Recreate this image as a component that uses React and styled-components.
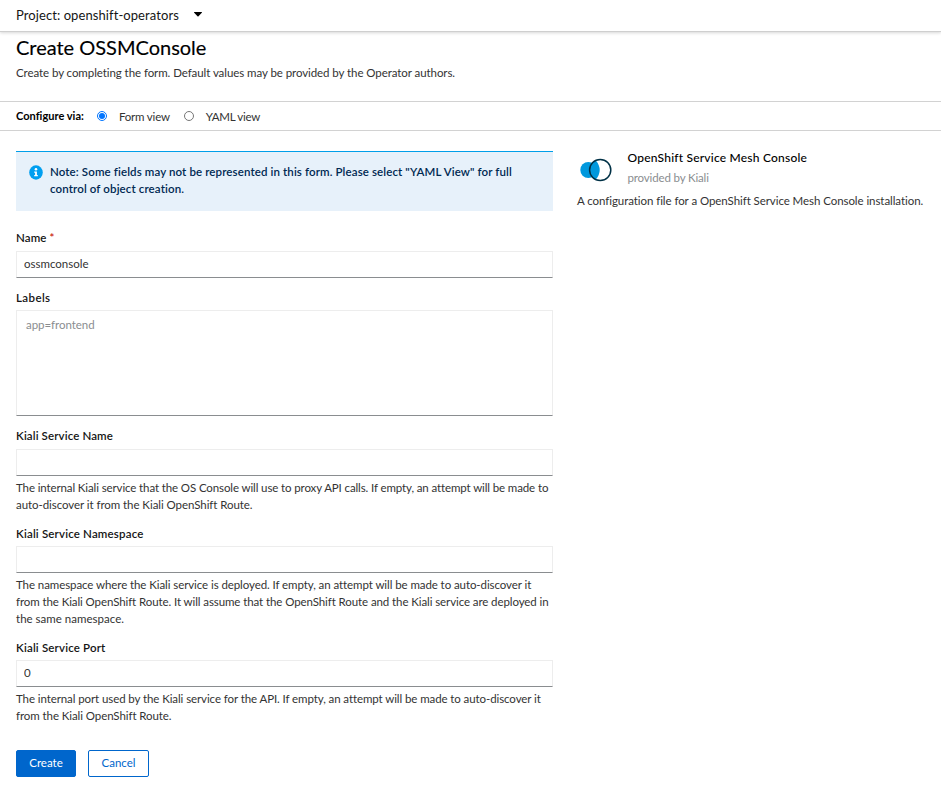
import React from "react";
import styled, { createGlobalStyle } from "styled-components";

const GlobalStyle = createGlobalStyle`
  *, *::before, *::after { box-sizing: border-box; }
  body {
    margin: 0;
    background: #fff;
    color: #151515;
    font-family: Lato, "Liberation Sans", sans-serif;
    font-size: 11.5px;
    line-height: 17px;
  }
`;

const Page = styled.div`
  min-height: 786px;
  overflow: hidden;
`;

const ProjectBar = styled.header`
  display: flex;
  align-items: center;
  gap: 15px;
  height: 32px;
  padding: 0 16px;
  border-bottom: 1px solid #cfcfcf;
  box-shadow: 0 1px 3px rgba(0, 0, 0, 0.16);
  font-size: 13px;
`;

const Caret = styled.svg`
  width: 8px;
  height: 5px;
  margin-top: -3px;
`;

const Text = styled.span`
  display: block;
  white-space: nowrap;
  letter-spacing: ${({ $track = 0 }) => $track}px;
`;

const Heading = styled.section`
  height: 69px;
  padding: 2px 16px 0;
`;

const Title = styled.h1`
  margin: 0 0 4px;
  color: #000;
  font-size: 20px;
  font-weight: 400;
  line-height: 26px;
  letter-spacing: -0.01px;
  -webkit-text-stroke: 0.15px #000;
`;

const Description = styled.p`
  margin: 0;
  color: #333;
`;

const ViewBar = styled.div`
  display: flex;
  align-items: center;
  height: 30px;
  padding: 0 16px;
  border-top: 1px solid #d2d2d2;
  border-bottom: 1px solid #d2d2d2;
  color: #333;
`;

const ViewLabel = styled.strong`
  width: 81px;
  margin-top: -2px;
  color: #000;
  font-size: 11px;
  font-weight: 700;
`;

const Option = styled.label`
  display: flex;
  align-items: center;
  gap: 12px;
  margin-right: 14px;
`;

const Radio = styled.span`
  display: grid;
  place-items: center;
  width: 10px;
  height: 10px;
  margin-top: -1px;
  border: 1px solid ${({ $checked }) => ($checked ? "#0075ff" : "#767676")};
  border-radius: 50%;

  &::after {
    content: "";
    width: 6px;
    height: 6px;
    border-radius: 50%;
    background: ${({ $checked }) => ($checked ? "#0075ff" : "transparent")};
  }
`;

const Content = styled.main`
  display: grid;
  grid-template-columns: 537px 1fr;
  column-gap: 24px;
  padding: 20px 0 0 16px;
`;

const Alert = styled.div`
  display: flex;
  gap: 7px;
  height: 60px;
  margin-bottom: 18px;
  padding: 11px 13px 0;
  border-top: 1px solid #009fe9;
  background: #e7f1fa;
  color: #002952;
  font-weight: 600;
`;

const InfoIcon = styled.svg`
  flex: none;
  width: 14px;
  height: 15px;
  margin-top: 2px;
`;

const Field = styled.div`
  margin-bottom: ${({ $gap = 12 }) => $gap}px;
`;

const Label = styled.label`
  display: flex;
  gap: 3px;
  height: 17px;
  margin-bottom: ${({ $gap = 4 }) => $gap}px;
  font-weight: 600;
`;

const Required = styled.span`
  color: #c9190b;
`;

const control = `
  display: block;
  width: 100%;
  border: 1px solid #ededed;
  border-bottom-color: #8a8d90;
  border-radius: 0;
  outline: 0;
  background: #fff;
  color: #333;
  font: inherit;
`;

const Input = styled.input`
  ${control}
  height: 27px;
  padding: 0 7px 2px;
`;

const TextArea = styled.textarea`
  ${control}
  height: 106px;
  padding: 5px 9px;
  resize: none;
  letter-spacing: -0.05px;

  &::placeholder { color: #8a8d90; opacity: 1; }
`;

const Help = styled.div`
  margin-top: 3px;
  color: #333;
`;

const Actions = styled.div`
  display: flex;
  gap: 12px;
  margin-top: 26px;
`;

const Button = styled.button`
  width: ${({ $primary }) => ($primary ? 60 : 61)}px;
  height: 27px;
  padding: 0 0 2px;
  border: 1px solid #06c;
  border-radius: 2px;
  background: ${({ $primary }) => ($primary ? "#06c" : "#fff")};
  color: ${({ $primary }) => ($primary ? "#fff" : "#06c")};
  font: inherit;
`;

const Operator = styled.div`
  display: flex;
  height: 41px;
`;

const OperatorLogo = styled.svg`
  flex: none;
  width: 34px;
  height: 24px;
  margin: 7px 14.5px 0 2px;
`;

const OperatorName = styled.h2`
  margin: -2px 0 3px;
  color: #000;
  font-size: 12px;
  font-weight: 500;
  line-height: 17px;
`;

const Provider = styled.div`
  color: #8a8d90;
`;

const fields = [
  {
    id: "service-name",
    label: "Kiali Service Name",
    track: 0.121,
    labelGap: 5,
    help: [
      ["The internal Kiali service that the OS Console will use to proxy API calls. If empty, an attempt will be made to", -0.115],
      ["auto-discover it from the Kiali OpenShift Route.", -0.061],
    ],
  },
  {
    id: "service-namespace",
    label: "Kiali Service Namespace",
    track: 0.168,
    help: [
      ["The namespace where the Kiali service is deployed. If empty, an attempt will be made to auto-discover it", -0.08],
      ["from the Kiali OpenShift Route. It will assume that the OpenShift Route and the Kiali service are deployed in", -0.092],
      ["the same namespace.", 0.016],
    ],
  },
  {
    id: "service-port",
    label: "Kiali Service Port",
    track: 0.168,
    value: "0",
    help: [
      ["The internal port used by the Kiali service for the API. If empty, an attempt will be made to auto-discover it", -0.09],
      ["from the Kiali OpenShift Route.", -0.08],
    ],
  },
];

export default function App() {
  return (
    <Page>
      <GlobalStyle />
      <ProjectBar>
        <Text $track={0.08}>Project: openshift-operators</Text>
        <Caret viewBox="0 0 8 5"><path d="M.4 0h7.2q.7.1.2.7L4.5 4.2q-.5.5-1 0L.2.7Q-.3.1.4 0Z" fill="#000" /></Caret>
      </ProjectBar>

      <Heading>
        <Title>Create OSSMConsole</Title>
        <Description>
          <Text $track={-0.07}>Create by completing the form. Default values may be provided by the Operator authors.</Text>
        </Description>
      </Heading>

      <ViewBar>
        <ViewLabel><Text $track={0.021}>Configure via:</Text></ViewLabel>
        <Option><Radio $checked /><Text $track={-0.2}>Form view</Text></Option>
        <Option><Radio /><Text $track={-0.3}>YAML view</Text></Option>
      </ViewBar>

      <Content>
        <form onSubmit={(event) => event.preventDefault()}>
          <Alert>
            <InfoIcon viewBox="0 0 14 15">
              <ellipse cx="7" cy="7.5" rx="6.8" ry="7.2" fill="#009ff0" />
              <circle cx="7" cy="4.3" r="1.3" fill="#fff" />
              <path d="M5.2 6.4h2.7v3.5h.9v1.3H5.2V9.9h.9V7.7h-.9Z" fill="#fff" />
            </InfoIcon>
            <div>
              <Text $track={0.115}>Note: Some fields may not be represented in this form. Please select "YAML View" for full</Text>
              <Text $track={0.125}>control of object creation.</Text>
            </div>
          </Alert>

          <Field $gap={11}>
            <Label $gap={5} htmlFor="name"><Text $track={0.1}>Name</Text><Required>*</Required></Label>
            <Input id="name" defaultValue="ossmconsole" />
          </Field>
          <Field $gap={11}>
            <Label htmlFor="labels"><Text $track={0.397}>Labels</Text></Label>
            <TextArea id="labels" placeholder="app=frontend" />
          </Field>
          {fields.map(({ id, label, track, labelGap, value = "", help }) => (
            <Field key={id}>
              <Label htmlFor={id} $gap={labelGap}><Text $track={track}>{label}</Text></Label>
              <Input id={id} defaultValue={value} />
              <Help>
                {help.map(([line, spacing]) => <Text key={line} $track={spacing}>{line}</Text>)}
              </Help>
            </Field>
          ))}
          <Actions>
            <Button $primary type="submit">Create</Button>
            <Button type="button">Cancel</Button>
          </Actions>
        </form>

        <aside>
          <Operator>
            <OperatorLogo viewBox="0 0 34 24">
              <circle cx="9.3" cy="12" r="8" fill="#0098dd" />
              <circle cx="21.2" cy="12" r="10.8" fill="#fff" />
              <path d="M16.7 2.2A10.8 10.8 0 0 0 16.7 21.8Q24.7 12 16.7 2.2Z" fill="#0098dd" />
              <circle cx="21.2" cy="12" r="10.6" fill="none" stroke="#003146" strokeWidth="1.5" />
            </OperatorLogo>
            <div>
              <OperatorName><Text $track={0.21}>OpenShift Service Mesh Console</Text></OperatorName>
              <Provider><Text $track={-0.15}>provided by Kiali</Text></Provider>
            </div>
          </Operator>
          <Description><Text $track={-0.066}>A configuration file for a OpenShift Service Mesh Console installation.</Text></Description>
        </aside>
      </Content>
    </Page>
  );
}
